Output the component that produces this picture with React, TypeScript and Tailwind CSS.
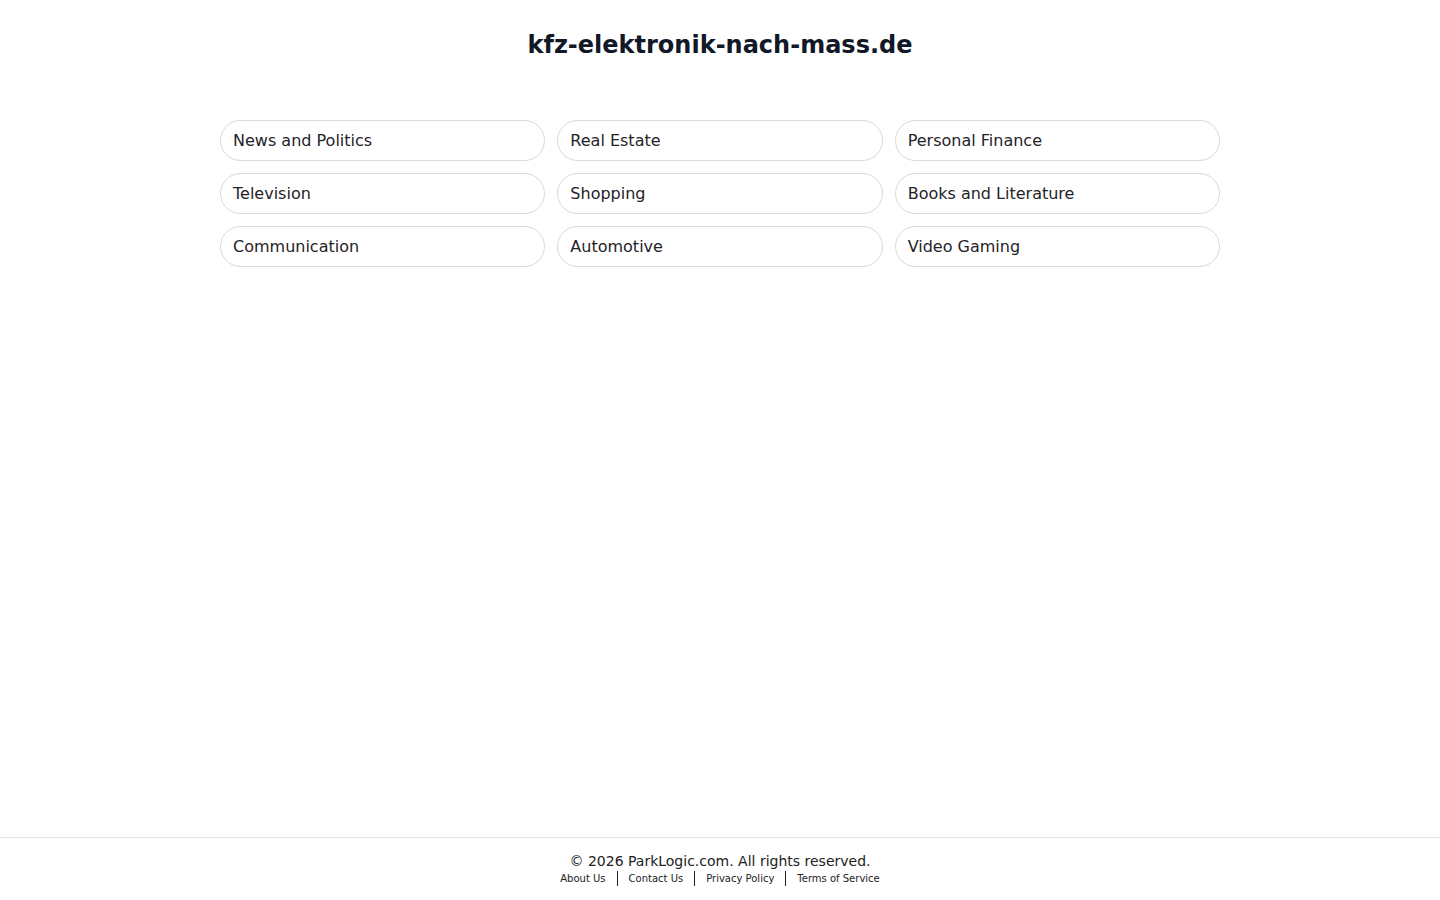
import React from 'react'

const topics = [
  'News and Politics',
  'Real Estate',
  'Personal Finance',
  'Television',
  'Shopping',
  'Books and Literature',
  'Communication',
  'Automotive',
  'Video Gaming',
]

const links = ['About Us', 'Contact Us', 'Privacy Policy', 'Terms of Service']

export default function App() {
  return (
    <div className="min-h-screen flex flex-col bg-white font-['DejaVu_Sans',sans-serif]">
      <main className="flex-1">
        <h1 className="pt-[29px] text-center text-2xl leading-8 font-bold text-[#111827]">
          kfz-elektronik-nach-mass.de
        </h1>

        {/* Related topics */}
        <div className="mx-auto mt-[59px] w-[1000px] grid grid-cols-3 gap-3">
          {topics.map(topic => (
            <a
              key={topic}
              href="#"
              className="h-[41px] flex items-center px-3 border border-[#d9d9d9] rounded-full text-base text-[#1f2328]"
            >
              {topic}
            </a>
          ))}
        </div>
      </main>

      <footer className="border-t border-[#e5e5e5] pt-[13px] pb-[14px] text-center">
        <p className="text-sm leading-5 text-[#222]">© 2026 ParkLogic.com. All rights reserved.</p>
        <div className="flex justify-center items-center text-[10px] leading-[15px] text-[#222]">
          {links.map((link, i) => (
            <React.Fragment key={link}>
              {i > 0 && <span className="mx-[11px] w-px h-[15px] bg-[#222]" />}
              <a href="#">{link}</a>
            </React.Fragment>
          ))}
        </div>
      </footer>
    </div>
  )
}
